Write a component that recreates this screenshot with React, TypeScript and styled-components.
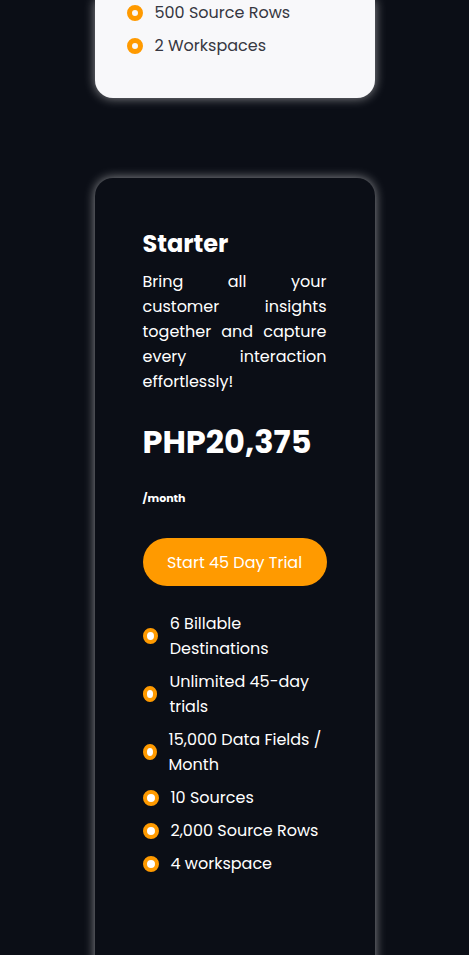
import React from "react";
import styled, { createGlobalStyle } from "styled-components";

const GlobalStyle = createGlobalStyle`
  html, body {
    margin: 0;
    padding: 0;
    background: #0b0e16;
  }
  body {
    font-family: Poppins, "DejaVu Sans", "Noto Sans", sans-serif;
    -webkit-font-smoothing: antialiased;
  }
  * { box-sizing: border-box; }
`;

const Page = styled.main`
  min-height: 955px;
  background: #0b0e16;
  display: flex;
  flex-direction: column;
  align-items: center;
  gap: 80px;
  overflow: hidden;
`;

const Card = styled.section<{ $light?: boolean }>`
  width: 280px;
  background: ${(p) => (p.$light ? "#f8f8fa" : "#0b0e16")};
  border-radius: ${(p) => (p.$light ? "0 0 18px 18px" : "18px")};
  box-shadow: 0 0 11px rgba(255, 255, 255, 0.55);
  padding: ${(p) => (p.$light ? "0 32px 40px" : "48px 48px 120px")};
  color: ${(p) => (p.$light ? "#363741" : "#ffffff")};
`;

const Title = styled.h2`
  margin: 0;
  font-size: 24px;
  line-height: 36px;
  font-weight: 700;
`;

const Description = styled.p`
  margin: 7px 0 0;
  font-size: 16px;
  line-height: 25px;
  text-align: justify;
`;

const Price = styled.div`
  margin-top: 24px;
  font-size: 32px;
  line-height: 48px;
  font-weight: 700;
`;

const Period = styled.div`
  margin-top: 23px;
  font-size: 11px;
  line-height: 18px;
  font-weight: 700;
`;

const TrialButton = styled.button`
  margin-top: 31px;
  width: 184px;
  height: 48px;
  border: none;
  border-radius: 24px;
  background: #ff9a00;
  color: #ffffff;
  font-family: inherit;
  font-size: 16px;
  cursor: pointer;
`;

const Features = styled.ul<{ $spaced?: boolean }>`
  list-style: none;
  margin: ${(p) => (p.$spaced ? "25px 0 0" : "0")};
  padding: 0;
  display: flex;
  flex-direction: column;
  gap: 8px;
`;

const Feature = styled.li`
  display: flex;
  align-items: center;
  gap: 12px;
  font-size: 16px;
  line-height: 25px;
`;

const Bullet = styled.span<{ $hollow?: boolean }>`
  width: 16px;
  height: 16px;
  border-radius: 50%;
  border: ${(p) => (p.$hollow ? "5px" : "4px")} solid #ff9a00;
  background: ${(p) => (p.$hollow ? "transparent" : "#ffffff")};
`;

const basicFeatures = ["500 Source Rows", "2 Workspaces"];

const starterFeatures = [
  "6 Billable Destinations",
  "Unlimited 45-day trials",
  "15,000 Data Fields / Month",
  "10 Sources",
  "2,000 Source Rows",
  "4 workspace",
];

export default function App() {
  return (
    <>
      <GlobalStyle />
      <Page>
        <Card $light>
          <Features>
            {basicFeatures.map((f) => (
              <Feature key={f}>
                <Bullet $hollow />
                <span>{f}</span>
              </Feature>
            ))}
          </Features>
        </Card>
        <Card>
          <Title>Starter</Title>
          <Description>
            Bring all your customer insights together and capture every
            interaction effortlessly!
          </Description>
          <Price>PHP20,375</Price>
          <Period>/month</Period>
          <TrialButton>Start 45 Day Trial</TrialButton>
          <Features $spaced>
            {starterFeatures.map((f) => (
              <Feature key={f}>
                <Bullet />
                <span>{f}</span>
              </Feature>
            ))}
          </Features>
        </Card>
      </Page>
    </>
  );
}
